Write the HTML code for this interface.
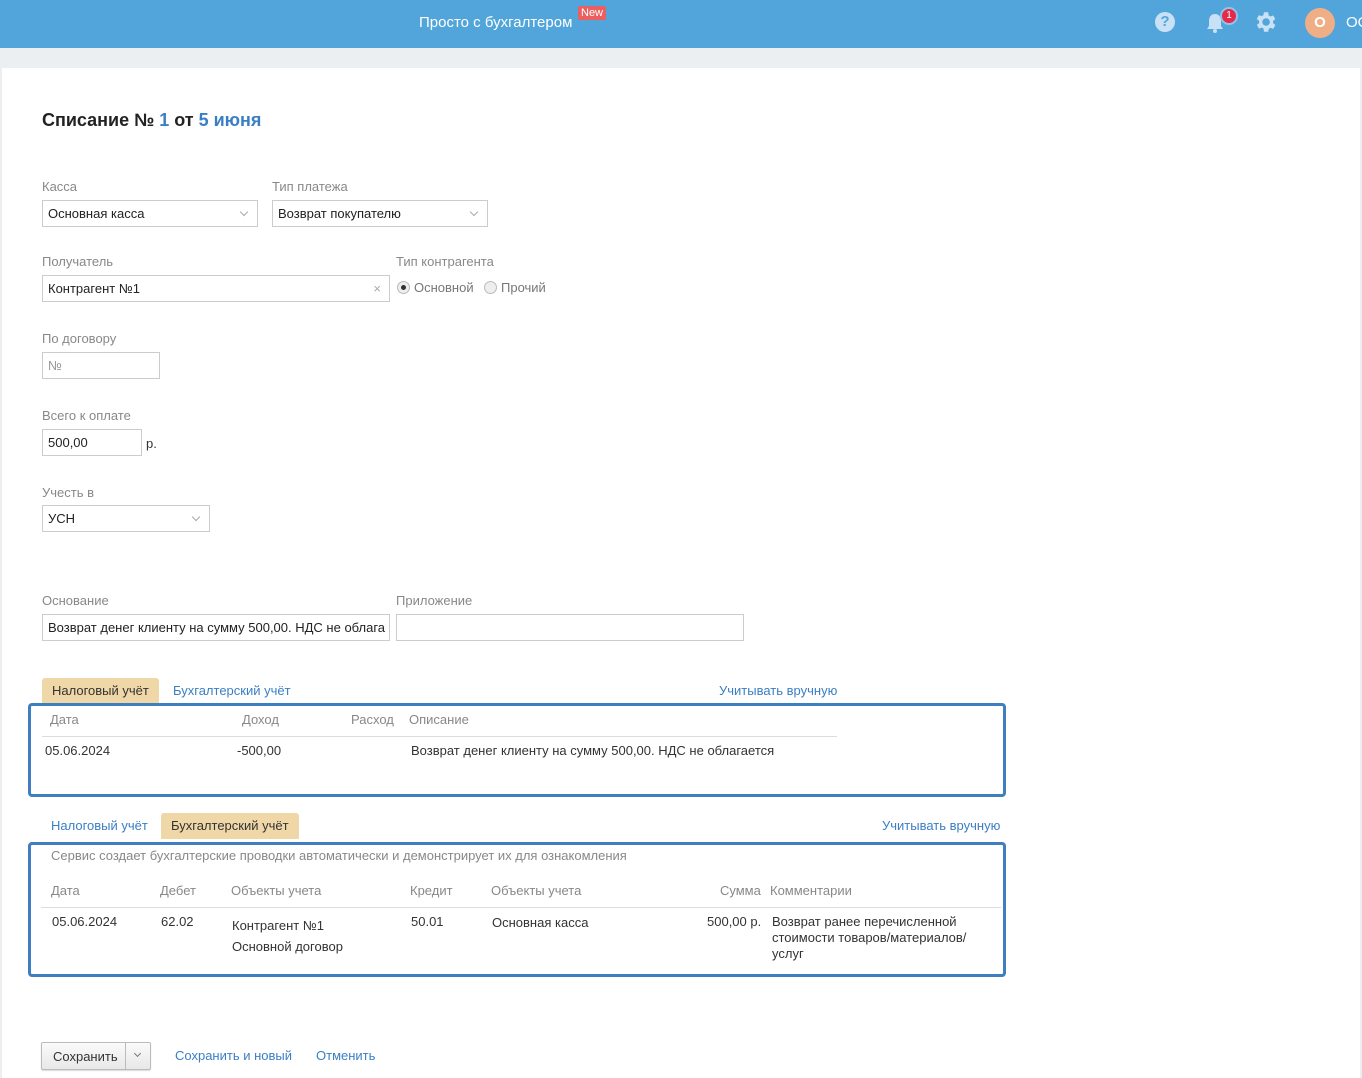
<!DOCTYPE html>
<html><head><meta charset="utf-8"><style>
*{box-sizing:border-box;margin:0;padding:0}
body{width:1362px;height:1078px;overflow:hidden;background:#eceff2;font-family:"Liberation Sans",sans-serif;font-size:13px;color:#333;position:relative}
.a{position:absolute;white-space:nowrap}
.top{position:absolute;left:0;top:0;width:1362px;height:48px;background:#52a5db}
.panel{position:absolute;left:2px;top:68px;width:1358px;height:1010px;background:#fff}
.lbl{color:#888;font-size:13px}
.inp{position:absolute;border:1px solid #ccc;height:27px;padding:5px 5px;font-size:13px;color:#222;background:#fff;white-space:nowrap}
.chev{position:absolute;right:10px;top:8px;width:6px;height:6px;border-right:1px solid #aaa;border-bottom:1px solid #aaa;transform:rotate(45deg)}
.link{color:#3a7fc4}
.box{position:absolute;border:3px solid #3f7fc0;border-radius:4px}
.th{color:#888}
.tab{position:absolute;height:26px;padding:5px 10px;font-size:13px}
.tab.on{background:#f0d7a8;color:#333;border-radius:3px 3px 0 0}
.tab.off{color:#3a7fc4}
</style></head><body>
<div class="top"></div>
<div class="a" style="left:419px;top:14px;color:#fff;font-size:15px">Просто с бухгалтером</div>
<div class="a" style="left:578px;top:6px;background:#ea6060;color:#fff;font-size:11px;padding:1px 3px;border-radius:2px">New</div>
<div class="a" style="left:1155px;top:12px;width:20px;height:20px;border-radius:50%;background:#c9e1f4;color:#52a5db;font-weight:bold;font-size:15px;text-align:center;line-height:20px">?</div>
<svg class="a" style="left:1205px;top:12px" width="20" height="22" viewBox="0 0 20 22"><path d="M10 2c-4 0-6 3-6 7v5l-2 3h16l-2-3V9c0-4-2-7-6-7z" fill="#c9e1f4"/><circle cx="10" cy="19" r="2" fill="#c9e1f4"/></svg>
<div class="a" style="left:1220px;top:7px;width:18px;height:18px;border-radius:50%;background:#e4294b;border:2px solid #8ec3ea;color:#fff;font-size:10px;text-align:center;line-height:14px">1</div>
<svg class="a" style="left:1252px;top:9px" width="26" height="26" viewBox="0 0 24 24"><path fill="#c9e1f4" d="M19.4 13a7.5 7.5 0 000-2l2.1-1.6-2-3.5-2.5 1a7.4 7.4 0 00-1.7-1L15 3h-4l-.4 2.7a7.4 7.4 0 00-1.7 1l-2.5-1-2 3.5L6.6 11a7.5 7.5 0 000 2l-2.1 1.6 2 3.5 2.5-1a7.4 7.4 0 001.7 1L11 21h4l.4-2.7a7.4 7.4 0 001.7-1l2.5 1 2-3.5zM13 15.5a3.5 3.5 0 110-7 3.5 3.5 0 010 7z"/></svg>
<div class="a" style="left:1305px;top:8px;width:30px;height:30px;border-radius:50%;background:#f0ae86;color:#fff;font-weight:bold;font-size:15px;text-align:center;line-height:30px">O</div>
<div class="a" style="left:1346px;top:14px;color:#fff;font-size:15px">OO</div>

<div class="panel"></div>
<div class="a" style="left:42px;top:110px;font-size:18px;font-weight:bold;color:#222">Списание № <span style="color:#3a7fc4">1</span> от <span style="color:#3a7fc4">5 июня</span></div>

<div class="a lbl" style="left:42px;top:179px">Касса</div>
<div class="inp" style="left:42px;top:200px;width:216px">Основная касса<i class="chev"></i></div>
<div class="a lbl" style="left:272px;top:179px">Тип платежа</div>
<div class="inp" style="left:272px;top:200px;width:216px">Возврат покупателю<i class="chev"></i></div>

<div class="a lbl" style="left:42px;top:254px">Получатель</div>
<div class="inp" style="left:42px;top:275px;width:348px">Контрагент №1<span style="position:absolute;right:8px;top:5px;color:#aaa">×</span></div>
<div class="a lbl" style="left:396px;top:254px">Тип контрагента</div>
<div class="a" style="left:397px;top:281px;width:13px;height:13px;border:1px solid #bbb;border-radius:50%;background:#eee"><div style="width:5px;height:5px;border-radius:50%;background:#333;margin:3px"></div></div>
<div class="a lbl" style="left:414px;top:280px;color:#777">Основной</div>
<div class="a" style="left:484px;top:281px;width:13px;height:13px;border:1px solid #bbb;border-radius:50%;background:#eee"></div>
<div class="a lbl" style="left:501px;top:280px;color:#777">Прочий</div>

<div class="a lbl" style="left:42px;top:331px">По договору</div>
<div class="inp" style="left:42px;top:352px;width:118px;color:#999">№</div>

<div class="a lbl" style="left:42px;top:408px">Всего к оплате</div>
<div class="inp" style="left:42px;top:429px;width:100px">500,00</div>
<div class="a" style="left:146px;top:436px">р.</div>

<div class="a lbl" style="left:42px;top:485px">Учесть в</div>
<div class="inp" style="left:42px;top:505px;width:168px">УСН<i class="chev"></i></div>

<div class="a lbl" style="left:42px;top:593px">Основание</div>
<div class="inp" style="left:42px;top:614px;width:348px;overflow:hidden">Возврат денег клиенту на сумму 500,00. НДС не облага</div>
<div class="a lbl" style="left:396px;top:593px">Приложение</div>
<div class="inp" style="left:396px;top:614px;width:348px"></div>

<div class="tab on" style="left:42px;top:678px">Налоговый учёт</div>
<div class="tab off" style="left:163px;top:678px">Бухгалтерский учёт</div>
<div class="a link" style="left:719px;top:683px">Учитывать вручную</div>
<div class="box" style="left:28px;top:703px;width:978px;height:94px"></div>
<div class="a th" style="left:50px;top:712px">Дата</div>
<div class="a th" style="left:242px;top:712px">Доход</div>
<div class="a th" style="left:351px;top:712px">Расход</div>
<div class="a th" style="left:409px;top:712px">Описание</div>
<div class="a" style="left:42px;top:736px;width:795px;border-top:1px solid #ddd"></div>
<div class="a" style="left:45px;top:743px">05.06.2024</div>
<div class="a" style="left:237px;top:743px">-500,00</div>
<div class="a" style="left:411px;top:743px">Возврат денег клиенту на сумму 500,00. НДС не облагается</div>

<div class="tab off" style="left:41px;top:813px">Налоговый учёт</div>
<div class="tab on" style="left:161px;top:813px">Бухгалтерский учёт</div>
<div class="a link" style="left:882px;top:818px">Учитывать вручную</div>
<div class="box" style="left:28px;top:842px;width:978px;height:135px"></div>
<div class="a th" style="left:51px;top:848px">Сервис создает бухгалтерские проводки автоматически и демонстрирует их для ознакомления</div>
<div class="a th" style="left:51px;top:883px">Дата</div>
<div class="a th" style="left:160px;top:883px">Дебет</div>
<div class="a th" style="left:231px;top:883px">Объекты учета</div>
<div class="a th" style="left:410px;top:883px">Кредит</div>
<div class="a th" style="left:491px;top:883px">Объекты учета</div>
<div class="a th" style="left:720px;top:883px">Сумма</div>
<div class="a th" style="left:770px;top:883px">Комментарии</div>
<div class="a" style="left:41px;top:907px;width:960px;border-top:1px solid #ddd"></div>
<div class="a" style="left:52px;top:914px">05.06.2024</div>
<div class="a" style="left:161px;top:914px">62.02</div>
<div class="a" style="left:232px;top:915px;line-height:21px">Контрагент №1<br>Основной договор</div>
<div class="a" style="left:411px;top:914px">50.01</div>
<div class="a" style="left:492px;top:915px">Основная касса</div>
<div class="a" style="left:707px;top:914px">500,00 р.</div>
<div class="a" style="left:772px;top:914px;line-height:16px">Возврат ранее перечисленной<br>стоимости товаров/материалов/<br>услуг</div>

<div class="a" style="left:41px;top:1042px;width:110px;height:28px;border:1px solid #bbb;border-radius:2px;background:linear-gradient(#fafafa,#e8e8e8);box-shadow:0 1px 1px rgba(0,0,0,.15)">
<span style="position:absolute;left:11px;top:6px;color:#333">Сохранить</span>
<span style="position:absolute;left:83px;top:0;height:26px;border-left:1px solid #bbb"></span>
<span style="position:absolute;left:93px;top:8px;width:5px;height:5px;border-right:1px solid #777;border-bottom:1px solid #777;transform:rotate(45deg)"></span>
</div>
<div class="a link" style="left:175px;top:1048px">Сохранить и новый</div>
<div class="a link" style="left:316px;top:1048px">Отменить</div>
</body></html>
